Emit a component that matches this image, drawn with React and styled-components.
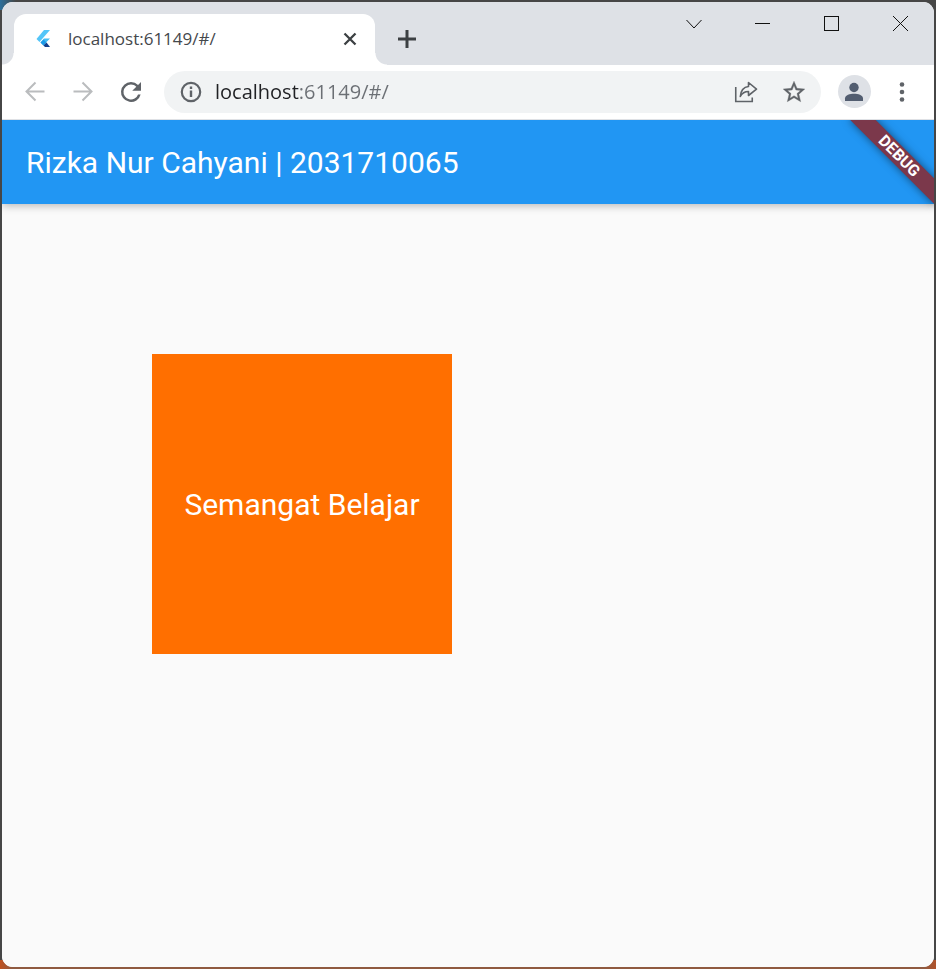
import React from "react";
import styled, { createGlobalStyle } from "styled-components";

const GlobalStyle = createGlobalStyle`
  *, *::before, *::after { box-sizing: border-box; }
  body { margin: 0; font-family: Roboto, sans-serif; }
`;

const Desktop = styled.div`
  display: flex;
  min-height: 100vh;
  padding: 2px;
  background:
    linear-gradient(90deg, #2b6f9c, transparent) top left / 16px 10px no-repeat,
    linear-gradient(90deg, #c0501f, #8f5a40 12px, #8f5a40 calc(100% - 12px), #b0522a) bottom / 100% 9px no-repeat,
    #464646;
`;

const BrowserWindow = styled.div`
  display: flex;
  flex: 1;
  flex-direction: column;
  min-width: 0;
  overflow: hidden;
  border-radius: 11px;
  background: #ffffff;
`;

const TabStrip = styled.header`
  display: flex;
  height: 63px;
  padding-left: 12px;
  background: #dee1e6;
`;

const Tab = styled.div`
  position: relative;
  display: flex;
  align-items: center;
  flex: 0 1 361px;
  min-width: 0;
  margin-top: 12px;
  padding: 0 13px 1px 20px;
  border-radius: 12px 12px 0 0;
  background: #ffffff;

  &::before,
  &::after {
    content: "";
    position: absolute;
    bottom: 0;
    width: 12px;
    height: 12px;
  }
  &::before {
    right: 100%;
    background: radial-gradient(circle at 0 0, transparent 11px, #ffffff 12px);
  }
  &::after {
    left: 100%;
    background: radial-gradient(circle at 100% 0, transparent 11px, #ffffff 12px);
  }
`;

const TabTitle = styled.span`
  flex: 1;
  margin-left: 16px;
  overflow: hidden;
  color: #45484c;
  font: 17px/24px "Open Sans", sans-serif;
  white-space: nowrap;
`;

const IconButton = styled.button`
  display: inline-flex;
  align-items: center;
  justify-content: center;
  flex: none;
  width: ${(p) => p.$width || 48}px;
  height: ${(p) => p.$height || 42}px;
  padding: 0;
  border: 0;
  background: transparent;
  color: ${(p) => p.$color || "#5f6368"};

  svg { display: block; }
`;

const NewTab = styled(IconButton)`
  margin: 16px 0 0 11px;
`;

const WindowControls = styled.div`
  display: flex;
  margin-left: auto;
`;

const Toolbar = styled.nav`
  display: flex;
  align-items: center;
  height: 55px;
  padding: 0 8px 1px 9px;
  border-bottom: 1px solid #dfe1e5;
`;

const AddressBar = styled.div`
  display: flex;
  align-items: center;
  flex: 1;
  min-width: 0;
  height: 42px;
  margin: 0 9px;
  padding: 0 3px;
  border-radius: 21px;
  background: #f1f3f4;
`;

const AddressInput = styled.input`
  flex: 1;
  min-width: 0;
  height: 30px;
  padding: 0;
  border: 0;
  outline: 0;
  background: linear-gradient(90deg, #202124 84px, #6b6f74 84px);
  background-clip: text;
  color: #6b6f74;
  -webkit-text-fill-color: transparent;
  font: 20px/30px "Open Sans", sans-serif;
`;

const Avatar = styled.span`
  display: flex;
  align-items: center;
  justify-content: center;
  width: 33px;
  height: 33px;
  border-radius: 50%;
  background: #dee1e6;
`;

const Page = styled.main`
  position: relative;
  flex: 1;
  overflow: hidden;
  background: #fafafa;
`;

const AppBar = styled.header`
  display: flex;
  align-items: center;
  height: 84px;
  padding: 0 24px;
  background: #2196f3;
  box-shadow: 0 2px 8px rgba(0, 0, 0, 0.26);
`;

const AppTitle = styled.h1`
  margin: 0;
  color: #ffffff;
  font: 400 30px/35px Roboto, sans-serif;
  white-space: nowrap;
`;

const DebugBanner = styled.div`
  position: absolute;
  top: 27px;
  right: -25px;
  width: 120px;
  height: 18px;
  background: #7b384b;
  box-shadow: 0 0 9px rgba(0, 0, 0, 0.5);
  color: #ffffff;
  font: 700 16px/18px Roboto, sans-serif;
  text-align: center;
  transform: rotate(45deg);
`;

const Card = styled.section`
  display: flex;
  align-items: center;
  justify-content: center;
  width: 300px;
  height: 300px;
  margin: 150px;
  background: #ff6f00;
  color: #ffffff;
  font: 400 30px/35px Roboto, sans-serif;
`;

const FlutterIcon = () => (
  <svg width="18" height="20" viewBox="0 0 18 20" aria-hidden="true">
    <path d="M10 1h6L5.500 13 2.500 10z" fill="#54c5f8" />
    <path d="M10 9.500h6L12.500 13l-3 3.500-3-3z" fill="#45bdf4" />
    <path d="M6.500 13.500l3-3 3 3-3 3z" fill="#1c9be8" />
    <path d="M9.500 16.500l3-3L16 18h-5z" fill="#123f8c" />
  </svg>
);

const Lines = ({ d, size = 24, width = 2, crisp }) => (
  <svg
    width={size}
    height={size}
    viewBox={`0 0 ${size} ${size}`}
    fill="none"
    stroke="currentColor"
    strokeWidth={width}
    shapeRendering={crisp ? "crispEdges" : undefined}
    aria-hidden="true"
  >
    <path d={d} />
  </svg>
);

const ReloadIcon = () => (
  <svg width="30" height="30" viewBox="0 0 24 24" fill="currentColor" aria-hidden="true">
    <path d="M17.65 6.35A7.96 7.96 0 0 0 12 4a8 8 0 1 0 7.73 10h-2.08A6 6 0 1 1 12 6c1.66 0 3.14.69 4.22 1.78L13 11h7V4z" />
  </svg>
);

const InfoIcon = () => (
  <svg width="24" height="24" viewBox="0 0 24 24" fill="none" stroke="currentColor" aria-hidden="true">
    <circle cx="12" cy="12" r="9.200" strokeWidth="2.200" />
    <path d="M12 6.500v2.500M12 10.500v6.500" strokeWidth="2.400" />
  </svg>
);

const StarIcon = () => (
  <svg width="26" height="26" viewBox="0 0 24 24" fill="currentColor" stroke="currentColor" strokeWidth="0.3" aria-hidden="true">
    <path d="M22 9.240l-7.190-.620L12 2 9.190 8.630 2 9.240l5.460 4.730L5.820 21 12 17.270 18.180 21l-1.630-7.030zM12 15.400l-3.760 2.270 1-4.280-3.320-2.880 4.380-.380L12 6.100l1.710 4.040 4.380.380-3.320 2.880 1 4.280z" />
  </svg>
);

const ShareIcon = () => (
  <svg width="24" height="24" viewBox="0 0 24 24" fill="none" stroke="currentColor" strokeWidth="1.6" aria-hidden="true">
    <path d="M1.750 7v14.500h16.500V17.500" />
    <path d="M14.500 2.500l8 6.700-8 6.300v-4c-4 0-6.500 1.700-8.200 5 .5-5.500 3.500-9.500 8.200-10z" strokeLinejoin="round" />
  </svg>
);

const PersonIcon = () => (
  <svg width="20" height="20" viewBox="0 0 20 20" fill="#525d70" aria-hidden="true">
    <circle cx="10" cy="5.500" r="4.700" />
    <path d="M1 19v-2.500C1 13.200 6 11.800 10 11.800s9 1.400 9 4.700V19z" />
  </svg>
);

const MenuIcon = () => (
  <svg width="24" height="24" viewBox="0 0 24 24" fill="currentColor" aria-hidden="true">
    <circle cx="12" cy="4.500" r="2.300" />
    <circle cx="12" cy="12" r="2.300" />
    <circle cx="12" cy="19.500" r="2.300" />
  </svg>
);

const windowControls = [
  ["Search tabs", "M5.500 9L13 17L20.500 9", false],
  ["Minimize", "M5 12.500h15", true],
  ["Maximize", "M5.500 5.500h14v14h-14z", true],
  ["Close window", "M5 5l15 15M20 5l-15 15", false],
];

export default function App() {
  return (
    <>
      <GlobalStyle />
      <Desktop>
        <BrowserWindow>
          <TabStrip>
            <Tab>
              <FlutterIcon />
              <TabTitle>localhost:61149/#/</TabTitle>
              <IconButton $width={24} $height={24} $color="#3c4043" aria-label="Close tab">
                <Lines d="M6.500 6.500l11 11M17.500 6.500l-11 11" width={2.3} />
              </IconButton>
            </Tab>
            <NewTab $width={42} $color="#3c4043" aria-label="New tab">
              <Lines d="M12 3v18M3 12h18" width={3} />
            </NewTab>
            <WindowControls>
              {windowControls.map(([label, d, crisp]) => (
                <IconButton key={label} $width={69} $color="#111111" aria-label={label}>
                  <Lines d={d} width={1} crisp={crisp} />
                </IconButton>
              ))}
            </WindowControls>
          </TabStrip>
          <Toolbar>
            <IconButton $color="#babcbe" aria-label="Back">
              <Lines d="M21.500 11.500H4M12.500 2.500L3.500 11.500L12.500 20.500" />
            </IconButton>
            <IconButton $color="#babcbe" aria-label="Forward">
              <Lines d="M2.500 11.500H20M11.500 2.500L20.500 11.500L11.500 20.500" />
            </IconButton>
            <IconButton aria-label="Reload">
              <ReloadIcon />
            </IconButton>
            <AddressBar>
              <IconButton aria-label="View site information">
                <InfoIcon />
              </IconButton>
              <AddressInput aria-label="Address" defaultValue="localhost:61149/#/" spellCheck={false} />
              <IconButton aria-label="Share this page">
                <ShareIcon />
              </IconButton>
              <IconButton aria-label="Bookmark this tab">
                <StarIcon />
              </IconButton>
            </AddressBar>
            <IconButton aria-label="Profile">
              <Avatar>
                <PersonIcon />
              </Avatar>
            </IconButton>
            <IconButton aria-label="Browser menu">
              <MenuIcon />
            </IconButton>
          </Toolbar>
          <Page>
            <AppBar>
              <AppTitle>Rizka Nur Cahyani | 2031710065</AppTitle>
            </AppBar>
            <DebugBanner>DEBUG</DebugBanner>
            <Card>Semangat Belajar</Card>
          </Page>
        </BrowserWindow>
      </Desktop>
    </>
  );
}
